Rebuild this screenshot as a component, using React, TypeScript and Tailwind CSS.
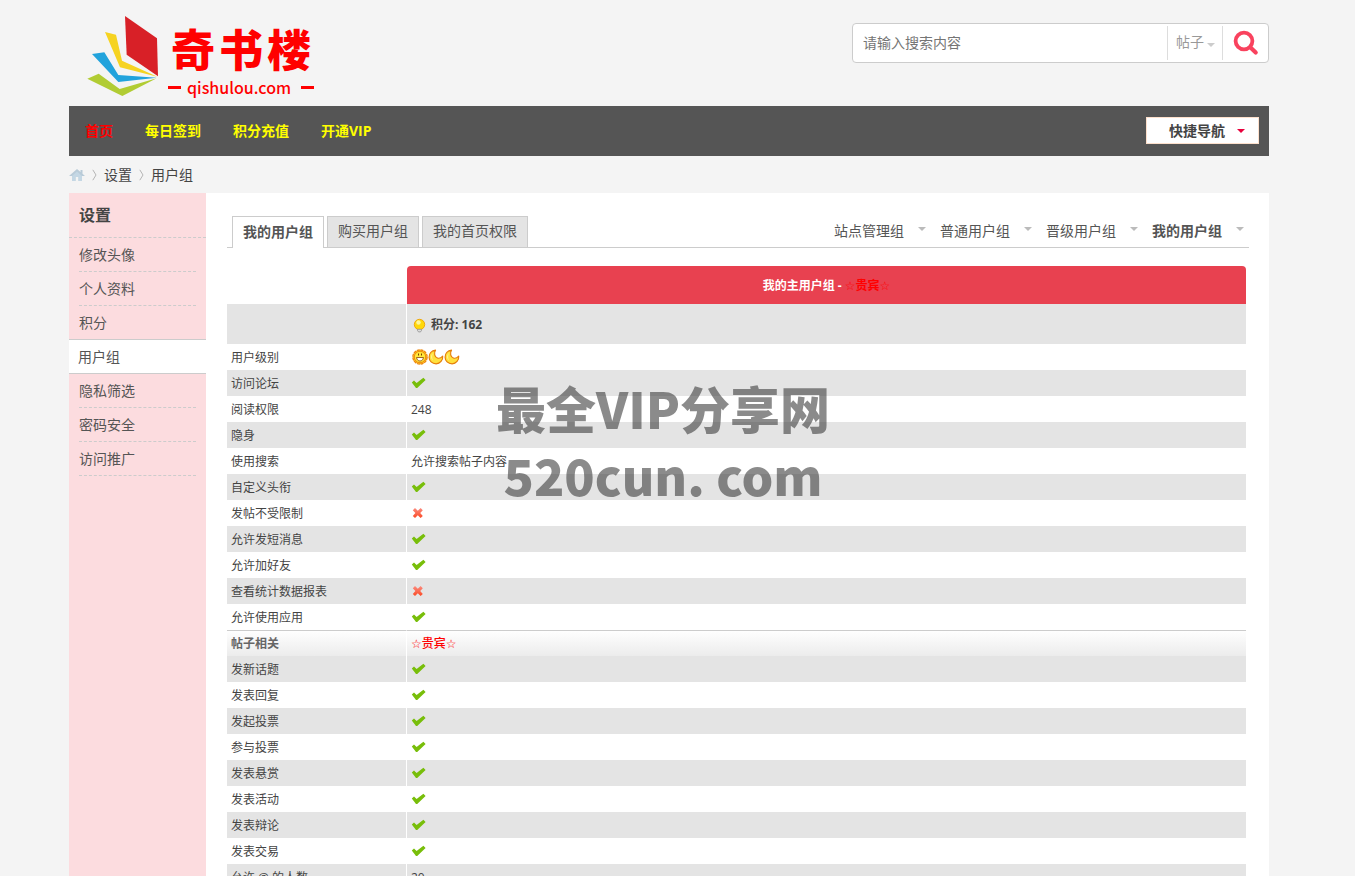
import React, { useState } from 'react';

type CellValue = 'yes' | 'no' | 'level' | string;

interface PermissionRow { label: string; value: CellValue; }

const NAV_LINKS = ['首页', '每日签到', '积分充值', '开通VIP'];
const SIDE_LINKS = ['修改头像', '个人资料', '积分', '用户组', '隐私筛选', '密码安全', '访问推广'];
const TABS = ['我的用户组', '购买用户组', '我的首页权限'];
const GROUP_MENUS = ['站点管理组', '普通用户组', '晋级用户组', '我的用户组'];

const BASE_ROWS: PermissionRow[] = [
  { label: '用户级别', value: 'level' },
  { label: '访问论坛', value: 'yes' },
  { label: '阅读权限', value: '248' },
  { label: '隐身', value: 'yes' },
  { label: '使用搜索', value: '允许搜索帖子内容' },
  { label: '自定义头衔', value: 'yes' },
  { label: '发帖不受限制', value: 'no' },
  { label: '允许发短消息', value: 'yes' },
  { label: '允许加好友', value: 'yes' },
  { label: '查看统计数据报表', value: 'no' },
  { label: '允许使用应用', value: 'yes' },
];

const POST_ROWS: PermissionRow[] = [
  { label: '发新话题', value: 'yes' },
  { label: '发表回复', value: 'yes' },
  { label: '发起投票', value: 'yes' },
  { label: '参与投票', value: 'yes' },
  { label: '发表悬赏', value: 'yes' },
  { label: '发表活动', value: 'yes' },
  { label: '发表辩论', value: 'yes' },
  { label: '发表交易', value: 'yes' },
  { label: '允许 @ 的人数', value: '20' },
];

// --- ICONS ---
const BookLogo = () => (
  <svg width="72" height="82" viewBox="81 45 216 246" aria-hidden="true">
    <path fill="#d82027" d="M195 48 291 115 294 229 200 164Z" />
    <path fill="#f6d321" d="M135 96 168 104 186 182 292 230 180 202Z" />
    <path fill="#22a3dc" d="M96 162 133 157 175 225 290 233 175 246Z" />
    <path fill="#b1cc33" d="M82 236 116 221 179 267 290 235 187 288Z" />
  </svg>
);

const Caret = ({ className }: { className?: string }) => (
  <svg width="8" height="4" viewBox="0 0 8 4" className={className} aria-hidden="true">
    <path fill="currentColor" d="M0 0h8L4 4Z" />
  </svg>
);

const SearchIcon = () => (
  <svg width="26" height="26" viewBox="0 0 26 26" fill="none" stroke="#f9425e" aria-hidden="true">
    <circle cx="11" cy="11" r="8.4" strokeWidth="3.8" />
    <path d="m17.5 17.5 5.2 5" strokeWidth="4.2" strokeLinecap="round" />
  </svg>
);

const HomeIcon = () => (
  <svg width="16" height="14" viewBox="0 0 16 14" aria-hidden="true">
    <path fill="#b9cbd8" d="M8 1 0 8h3v5h3.500V9h3v4H13V8h3l-2.500-2.200V2H11.500v2Z" />
    <path fill="#c4d7e4" d="M3 8 8 3.500 13 8v5H9.500V9h-3v4H3Z" />
  </svg>
);

const Chevron = () => (
  <svg width="5" height="12" viewBox="0 0 5 12" fill="none" stroke="#b5b5b5" aria-hidden="true">
    <path d="M.8.8 4 6 .8 11.200" />
  </svg>
);

const CheckIcon = () => (
  <svg width="16" height="16" viewBox="0 0 16 16" role="img" aria-label="允许">
    <path fill="#78be0a" d="M.8 7.600 3 5.600l2.600 2.300L12.400 2.800l2.200 2.100-8.400 8H5Z" />
  </svg>
);

const CrossIcon = () => (
  <svg width="16" height="16" viewBox="0 0 16 16" role="img" aria-label="不允许">
    <defs>
      <linearGradient id="crossFill" x1="0" y1="0" x2="0" y2="1">
        <stop offset="0" stopColor="#fb8c80" />
        <stop offset="1" stopColor="#fb4a24" />
      </linearGradient>
    </defs>
    <path fill="url(#crossFill)" d="M4 3 6.800 5.800 9.600 3l2.200 2.200L9.200 8l2.600 2.900-2.200 2.100-2.800-2.700L4 13l-2.200-2.100L4.400 8 1.800 5.200Z" />
  </svg>
);

const BulbIcon = () => (
  <svg width="16" height="16" viewBox="0 0 16 16" aria-hidden="true">
    <circle cx="8.500" cy="7.500" r="5.200" fill="#ffd90a" stroke="#f0a80c" />
    <circle cx="7.500" cy="5.500" r="2.200" fill="#fff69b" />
    <path fill="#dcdcdc" stroke="#909090" strokeWidth=".8" d="M6.500 12.300h4v1.200l-1 1.400h-2l-1-1.400Z" />
  </svg>
);

const SunIcon = () => (
  <svg width="16" height="16" viewBox="0 0 16 16" aria-hidden="true">
    <circle cx="8" cy="8" r="7.200" fill="#ffbe1a" stroke="#ea8410" strokeWidth="1.200" strokeDasharray="3 .8" />
    <circle cx="8" cy="8" r="5.700" fill="#ffe83a" stroke="#ea8410" strokeWidth=".9" />
    <path stroke="#7a3b00" d="M6.500 4.500v2M9.500 4.500v2" />
    <path fill="#fff" stroke="#8a4500" strokeWidth=".8" d="M4.500 8.500h7C11 11 9.800 12 8 12s-3-1-3.500-3.500Z" />
  </svg>
);

const MoonIcon = () => (
  <svg width="16" height="16" viewBox="0 0 16 16" aria-hidden="true">
    <path fill="#ffe13d" stroke="#e67e09" strokeWidth="1.200" strokeLinejoin="round" d="M7.500 1.200C5.700 4 6.500 8 9.400 9c2 .7 3.800-.2 5.300-1.800.4 3.800-2.600 7.600-6.600 7.600-4 0-7-3-7-6.600 0-3.700 2.600-6.600 6.400-7Z" />
    <path fill="#fff5a0" d="M4.800 4.300C2.500 6.500 2.800 9.500 4.800 11.500 3.900 9 3.900 6.500 4.800 4.300Z" />
  </svg>
);

// --- TABLE PIECES ---
const VipName = () => (
  <span className="text-[#f00]">
    <span className="font-['DejaVu_Sans',sans-serif] font-normal">☆</span>贵宾
    <span className="font-['DejaVu_Sans',sans-serif] font-normal">☆</span>
  </span>
);

const renderValue = (value: CellValue) => {
  if (value === 'yes') return <CheckIcon />;
  if (value === 'no') return <CrossIcon />;
  if (value === 'level') return <span className="flex pl-px"><SunIcon /><MoonIcon /><MoonIcon /></span>;
  return <span className="block pt-0.5">{value}</span>;
};

const Rows = ({ rows, grayFirst }: { rows: PermissionRow[]; grayFirst?: boolean }) => (
  <tbody>
    {rows.map((row, i) => (
      <tr key={row.label} className={(i % 2 === 0) === !!grayFirst ? 'h-[26px] bg-[#e4e4e4]' : 'h-[26px]'}>
        <th scope="row" className="border-r border-white pt-0.5 pl-1 text-left font-normal">{row.label}</th>
        <td className="pl-1">{renderValue(row.value)}</td>
      </tr>
    ))}
  </tbody>
);

const App: React.FC = () => {
  const [keyword, setKeyword] = useState('');
  const [tab, setTab] = useState(TABS[0]);

  return (
    <div className="relative h-screen overflow-y-auto bg-[#f4f4f4] pr-[17px] font-['Open_Sans','Noto_Sans_CJK_SC',sans-serif] text-sm text-[#444] [scrollbar-width:none]">
      <div className="mx-auto flex min-h-screen w-full max-w-[1200px] flex-col">
        {/* Header */}
        <header className="flex h-[106px] shrink-0 justify-between">
          <a href="#" className="flex gap-[9px] pt-[15px] pl-[18px] font-['Noto_Sans_CJK_SC',sans-serif] text-[#f00]">
            <BookLogo />
            <span className="flex flex-col items-center pt-1">
              <span className="flex gap-1 text-[44px] leading-[58px] font-black">
                <span>奇</span><span>书</span><span>楼</span>
              </span>
              <span className="flex items-center gap-[6px] text-base leading-5 font-medium">
                <span className="h-[3px] w-[13px] bg-[#f00]" />
                qishulou.com
                <span className="ml-1 h-[3px] w-[13px] bg-[#f00]" />
              </span>
            </span>
          </a>
          <form className="mt-[23px] flex h-10 w-[417px] items-center rounded border border-[#ccc] bg-white">
            <input type="text" aria-label="搜索" placeholder="请输入搜索内容" value={keyword} onChange={(e) => setKeyword(e.target.value)} className="min-w-0 flex-1 pl-[10px] outline-none placeholder:text-[#757575]" />
            <div className="relative h-[34px] border-x border-[#ddd]">
              <select aria-label="搜索类型" className="h-full w-[54px] appearance-none pb-[2px] pl-2 text-[#999] outline-none">
                <option>帖子</option>
              </select>
              <Caret className="pointer-events-none absolute top-[17px] right-[7px] text-[#ccc]" />
            </div>
            <button type="button" aria-label="搜索" className="flex h-full w-[45px] items-center justify-center"><SearchIcon /></button>
          </form>
        </header>

        {/* Nav */}
        <nav className="flex h-[50px] shrink-0 items-center justify-between bg-[#555] pr-[10px] font-bold">
          <div className="flex">
            {NAV_LINKS.map((link, i) => (
              <a key={link} href="#" className={i === 0 ? 'px-4 text-[#f00]' : 'px-4 text-[#ff0]'}>{link}</a>
            ))}
          </div>
          <button className="mt-[11px] flex h-[27px] w-[113px] items-center justify-end gap-3 self-start border border-[#fde0cc] bg-white pr-[13px] text-[#444]">
            快捷导航
            <Caret className="text-[#e8003c]" />
          </button>
        </nav>

        {/* Breadcrumb */}
        <div className="flex h-[37px] shrink-0 items-center gap-[7px]">
          <a href="#" aria-label="首页"><HomeIcon /></a>
          <Chevron />
          <a href="#">设置</a>
          <Chevron />
          <a href="#">用户组</a>
        </div>

        <div className="flex flex-1 bg-white">
          {/* Sidebar */}
          <aside className="w-[137px] shrink-0 bg-[#fcdcdf]">
            <h2 className="h-[45px] border-b border-dashed border-[#ccc] pl-[10px] text-base leading-[44px] font-bold">设置</h2>
            <ul className="leading-[33px] text-[#555]">
              {SIDE_LINKS.map(link => (
                link === '用户组' ? (
                  <li key={link} className="-mt-px border-y border-[#ccc] bg-white px-[9px]"><a href="#">{link}</a></li>
                ) : (
                  <li key={link} className="px-[10px]"><a href="#" className="block border-b border-dashed border-[#ccc]">{link}</a></li>
                )
              ))}
            </ul>
          </aside>

          {/* Content */}
          <main className="min-w-0 flex-1 pt-[23px] pr-5 pl-[21px]">
            <div className="flex h-8 justify-between border-b border-[#ccc] pl-[5px] text-[#555]">
              <div className="flex gap-[3px]">
                {TABS.map(t => (
                  <button key={t} onClick={() => setTab(t)} className={t === tab ? 'h-8 border border-b-0 border-[#ccc] bg-white px-[10px] pb-[2px] font-bold' : 'h-8 border border-[#ccc] bg-[#e4e4e4] px-[10px] pb-[2px]'}>{t}</button>
                ))}
              </div>
              <div className="flex pb-[2px]">
                {GROUP_MENUS.map((menu, i) => (
                  <button key={menu} className={i === 3 ? 'flex w-[97px] items-center justify-between font-bold' : 'mr-[9px] flex w-[97px] items-center justify-between'}>
                    {menu}
                    <Caret className="mb-1 mr-[5px] text-[#bbb]" />
                  </button>
                ))}
              </div>
            </div>

            <div className="mt-[18px] pr-[3px]">
              <table className="w-full table-fixed border-separate border-spacing-0 text-xs">
                <colgroup>
                  <col className="w-[180px]" />
                  <col />
                </colgroup>
                <thead>
                  <tr className="h-[38px]">
                    <td />
                    <th scope="col" className="rounded-t bg-[#e84150] pt-0.5 text-center font-bold text-white">我的主用户组 - <VipName /></th>
                  </tr>
                  <tr className="h-10 bg-[#e4e4e4]">
                    <td className="border-r border-white" />
                    <th scope="col" className="pt-0.5 pl-1 text-left font-bold"><span className="flex items-center gap-1"><BulbIcon />积分: 162</span></th>
                  </tr>
                </thead>
                <Rows rows={BASE_ROWS} />
                <tbody>
                  <tr className="h-[26px] bg-linear-to-b from-white to-[#ececec]">
                    <th scope="col" className="border-t border-r border-t-[#ccc] border-r-white pl-1 text-left font-bold text-[#666]">帖子相关</th>
                    <th scope="col" className="border-t border-[#ccc] pl-1 text-left font-medium"><VipName /></th>
                  </tr>
                </tbody>
                <Rows rows={POST_ROWS} grayFirst />
              </table>
            </div>
          </main>
        </div>
      </div>

      {/* Watermark over the table */}
      <div className="pointer-events-none absolute top-[374px] left-[496px] text-center font-['Noto_Sans_CJK_SC',sans-serif] text-[50px] leading-[67px] font-black whitespace-nowrap text-[#3e3e3e]/60">
        <p>最全VIP分享网</p>
        <p>520cun. com</p>
      </div>
    </div>
  );
};

export default App;
